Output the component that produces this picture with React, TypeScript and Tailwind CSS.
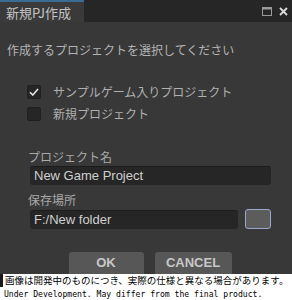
import React from "react";

const jp = { fontFamily: '"Noto Sans CJK JP", "Noto Sans", sans-serif' };
const sans = { fontFamily: '"Liberation Sans", Arial, sans-serif' };

function Check({ checked, label }: { checked?: boolean; label: string }) {
  return (
    <div className="flex items-center h-[14px] gap-[12px]">
      <div className="w-[14px] h-[14px] rounded-[2px] bg-[#262626] border border-[#1f1f1f] flex items-center justify-center">
        {checked && (
          <svg width="10" height="8" viewBox="0 0 10 8">
            <path d="M1 4.2 L3.8 7 L9 1" fill="none" stroke="#e6e6e6" strokeWidth="1.6" />
          </svg>
        )}
      </div>
      <span className="text-[12px] leading-[14px] text-[#b0b0b0]" style={jp}>{label}</span>
    </div>
  );
}

export default function App() {
  return (
    <div className="w-[292px] h-[300px] bg-[#383838] flex flex-col overflow-hidden">
      <div className="h-[22px] bg-[#262626] flex items-stretch shrink-0">
        <div className="w-[84px] bg-[#3a3a3a] border-t-2 border-[#3b6a93] flex items-center pl-[6px]">
          <span className="text-[13px] leading-none text-[#c4c4c4]" style={jp}>新規PJ作成</span>
        </div>
        <div className="flex-1" />
        <div className="flex items-center gap-[7px] pr-[4px]">
          <svg width="10" height="9" viewBox="0 0 10 9">
            <rect x="0.5" y="0.5" width="9" height="8" fill="none" stroke="#9a9a9a" />
            <rect x="0.5" y="0.5" width="9" height="2" fill="#9a9a9a" />
          </svg>
          <svg width="9" height="9" viewBox="0 0 9 9">
            <path d="M1 1 L8 8 M8 1 L1 8" stroke="#dcdcdc" strokeWidth="1.8" />
          </svg>
        </div>
      </div>
      <div className="flex-1 flex flex-col pt-[20px]">
        <div className="pl-[7px] text-[12px] leading-[16px] text-[#b4b4b4]" style={jp}>
          作成するプロジェクトを選択してください
        </div>
        <div className="pl-[27px] mt-[27px] flex flex-col gap-[8px]">
          <Check checked label="サンプルゲーム入りプロジェクト" />
          <Check label="新規プロジェクト" />
        </div>
        <div className="pl-[28px] pr-[21px] mt-[28px] flex flex-col">
          <div className="text-[12px] leading-[16px] text-[#a8a8a8]" style={jp}>プロジェクト名</div>
          <div className="mt-[1px] ml-[2px] h-[19px] bg-[#262626] border-t border-[#1c1c1c] rounded-[3px] flex items-center pl-[4px] text-[13px] text-[#d0d0d0]" style={sans}>
            New Game Project
          </div>
          <div className="mt-[7px] text-[12px] leading-[16px] text-[#a8a8a8]" style={jp}>保存場所</div>
          <div className="mt-[1px] ml-[2px] flex items-center gap-[7px]">
            <div className="flex-1 h-[19px] bg-[#262626] border-t border-[#1c1c1c] rounded-[3px] flex items-center pl-[4px] text-[13px] text-[#d0d0d0]" style={sans}>
              F:/New folder
            </div>
            <div className="w-[26px] h-[20px] rounded-[3px] bg-[#5c5c5c] border border-[#9aa8cc]" />
          </div>
        </div>
        <div className="mt-[23px] flex justify-center gap-[11px] pl-[8px]">
          <div className="w-[75px] h-[22px] bg-[#575757] rounded-t-[3px] flex items-center justify-center text-[13px] font-bold text-[#c8c8c8]" style={sans}>OK</div>
          <div className="w-[77px] h-[22px] bg-[#575757] rounded-t-[3px] flex items-center justify-center text-[13px] font-bold text-[#c8c8c8]" style={sans}>CANCEL</div>
        </div>
      </div>
      <div className="h-[28px] bg-white shrink-0 flex flex-col text-black">
        <div className="pl-[2px] text-[9.5px] leading-[13px] whitespace-nowrap border-l-[3px] border-[#1a1a1a]" style={jp}>
          画像は開発中のものにつき、実際の仕様と異なる場合があります。
        </div>
        <div className="pl-[4px] text-[8.1px] leading-[15px] whitespace-nowrap" style={{ fontFamily: '"DejaVu Sans Mono", monospace' }}>
          Under Development. May differ from the final product.
        </div>
      </div>
    </div>
  );
}
